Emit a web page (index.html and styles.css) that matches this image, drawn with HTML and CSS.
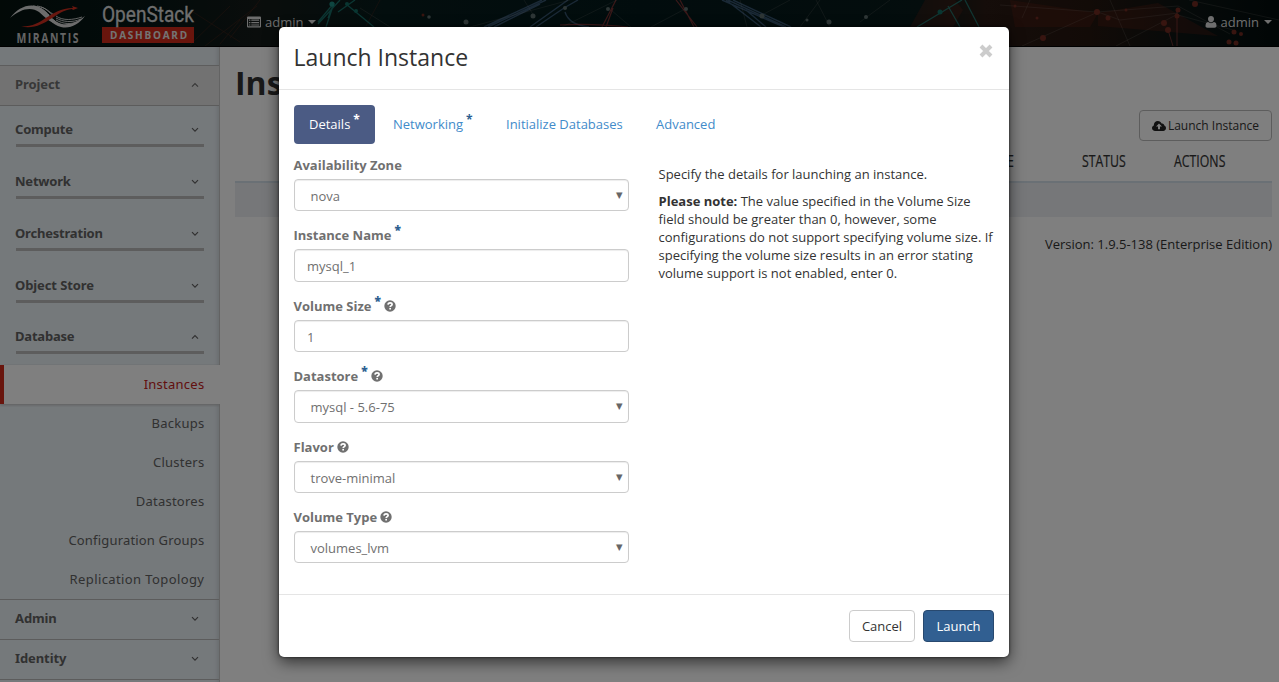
FILE: index.html
```html
<!DOCTYPE html>
<html lang="en">
<head>
<meta charset="utf-8">
<title>Instances - OpenStack Dashboard</title>
<link rel="stylesheet" href="styles.css">
</head>
<body>
<svg class="defs" width="0" height="0">
  <symbol id="help" viewBox="0 0 12 12"><circle cx="6" cy="6" r="5.7" fill="currentColor"/><path d="M4 4.6C4.1 3.4 5 2.8 6.1 2.8c1.2 0 2 .7 2 1.6 0 1.2-1.9 1.2-1.9 2.6" fill="none" stroke="#fff" stroke-width="1.7"/><rect x="5.3" y="7.9" width="1.700" height="1.600" fill="#fff"/></symbol>
  <symbol id="down" viewBox="0 0 8 6"><path d="M1 1.200 4 4.200 7 1.200" fill="none" stroke="currentColor" stroke-width="1.200"/></symbol>
  <symbol id="up" viewBox="0 0 8 6"><path d="M1 4.700 4 1.700 7 4.700" fill="none" stroke="currentColor" stroke-width="1.200"/></symbol>
</svg>

<header class="topbar">
  <svg class="topbar-art" viewBox="0 0 1279 46" preserveAspectRatio="none">
    <defs><linearGradient id="sky"><stop offset="0" stop-color="#04120f"/><stop offset=".12" stop-color="#061716"/><stop offset=".2" stop-color="#141a18"/><stop offset=".3" stop-color="#071c1c"/><stop offset=".5" stop-color="#03191b"/><stop offset=".72" stop-color="#081a1a"/><stop offset=".77" stop-color="#2a1a14"/><stop offset=".85" stop-color="#25160f"/><stop offset=".93" stop-color="#0b1413"/><stop offset="1" stop-color="#020c0c"/></linearGradient></defs>
    <rect width="1279" height="46" fill="url(#sky)"/>
    <path d="M910 27 925 0h30l8 10-10 17z M1010 0l5 27h75L1098 13zM1098 13l60-10 60 33-120-10z" fill="#6a2015" opacity=".3"/>
    <g fill="none" stroke="#5578a4" stroke-width="1.400" opacity=".6">
      <path d="M484 27 542 0M488 27 546 0M494 27 540 4M530 27l38-27M536 27l28-19 14-8M565 12q4 13 24 15M728 0l58 27M722 0l62 27M733 0l58 27M746 10l20 17M726 0l35 27"/>
    </g>
    <g fill="none" stroke="#c24040" stroke-width="1.200" opacity=".6"><path d="M616 0 602 27M613 8l-7 19M680 0l14 27M676 0l21 27M560 25q30-2 68 2"/></g>
    <g fill="none" stroke="#1fa298" stroke-width="1.300" opacity=".6"><path d="M318 22 334 3l-8 24M334 3l-6 15M318 24 340 0M346 4l28 23M355 0l-17 12M962 0l-45 27M948 6l12 21M965 0l14 27"/></g>
    <g fill="none" stroke="#a9a5a0" stroke-width=".6" opacity=".28"><path d="M390 27 360 8M470 27l100-27M534 16l-10-16M611 10l20 17M617 0l-55 27M685 9l-34 18M740 0l7 27M762 15 790 0M800 27l20-27M830 27l-14-27M890 0l-30 22M1000 5l97 7 81-6 52 28M1022 46l76-34 22 8 58-7M1178 15l55 15M1110 0l20 46M1030 0l-8 18M1176 15l-60 31M1279 20l-90-20"/></g>
    <path d="M1177 10v36M1168 30l5 16" stroke="#c24a4a" stroke-width=".8" opacity=".6"/>
    <g stroke="#b13d20" stroke-width=".6" opacity=".3"><path d="M190 45 230 6M205 46l52-40M220 44l20-24M190 10l50 32M260 0l-30 38M380 0l-14 26"/></g>
    <g fill="#702a20"><circle cx="1097" cy="12" r="3"/><circle cx="1108" cy="18" r="2.500"/><circle cx="1043" cy="38" r="3"/><circle cx="1178" cy="10" r="2.500"/><circle cx="1177" cy="16" r="2.500"/><circle cx="1164" cy="23" r="3"/><circle cx="1168" cy="30" r="3"/><circle cx="1195" cy="4" r="3"/><circle cx="1229" cy="42" r="2.500"/><circle cx="1236" cy="43" r="2.500"/><circle cx="1234" cy="32" r="2.500"/><circle cx="1241" cy="34" r="2"/><circle cx="1015" cy="6" r="1.500"/><circle cx="1037" cy="18" r="1.500"/><circle cx="1126" cy="10" r="1.500"/><circle cx="423" cy="15" r="1.500"/></g>
    <g fill="#5c6c6c"><circle cx="332" cy="4" r="2.600" fill="#1d8a80"/><circle cx="347" cy="4" r="2" fill="#126c62"/><circle cx="356" cy="11" r="2" fill="#126c62"/><circle cx="429" cy="17" r="1.800"/><circle cx="466" cy="22" r="2.500"/><circle cx="533" cy="16" r="2.500"/><circle cx="565" cy="8" r="2"/><circle cx="608" cy="9" r="2"/><circle cx="686" cy="9" r="2"/><circle cx="762" cy="16" r="2.500"/><circle cx="807" cy="20" r="1.500"/><circle cx="829" cy="22" r="2.500"/><circle cx="866" cy="17" r="2"/><circle cx="940" cy="12" r="2.500" fill="#126c62"/></g>
  </svg>
  <svg class="logo" viewBox="0 0 100 46">
    <g fill="#d8d8d8">
      <path d="M10 18C18 8 28 3 39 7c9 4 12 13 23 18-10 0-17-8-23-13C31 6 20 9 10 18z"/>
      <path d="M85 16C78 25 70 29 61 27c-9-2-13-10-20-16 8 5 13 11 21 13 9 1 15-2 23-8z"/>
    </g>
    <g fill="none" stroke="#d8d8d8" stroke-width=".9">
      <path d="M37 6c9 1 12 7 17 10M41 7c7 2 10 7 14 8M36 8c8 2 12 9 19 13M33 6c8 1 12 5 16 9M82 17c-9 3-19 4-26-1M81 19c-9 4-18 3-25-1M79 21c-8 4-16 3-23-1"/>
    </g>
    <path d="M21 26.500C44 27 48 9 73 8l-1-2 6 2-5 2-1-1C54 11 45 31 21 26.500z" fill="#d22f1f"/>
    <text class="mirantis" transform="translate(16.500 43) scale(.72 1)" textLength="86" lengthAdjust="spacing">MIRANTIS</text>
  </svg>
  <div class="brand">
    <svg class="wordmark" viewBox="0 0 96 27"><text x="0" y="22" textLength="92" lengthAdjust="spacingAndGlyphs">OpenStack</text></svg>
    <div class="ribbon">DASHBOARD</div>
  </div>
  <div class="context">
    <svg width="14" height="12" viewBox="0 0 14 12"><path fill="#ddd" fill-rule="evenodd" d="M1 0.500h12q1 0 1 1v9q0 1-1 1H1q-1 0-1-1v-9q0-1 1-1zM1.100 3v7.300h11.800V3z"/><path d="M2 4.200h1.400M4.300 4.200H12M2 6.600h1.400M4.300 6.600H12M2 9h1.400M4.300 9H12" stroke="#ddd" stroke-width="1.200"/></svg>
    <span>admin</span><i class="caret"></i>
  </div>
  <div class="user">
    <svg width="12" height="12" viewBox="0 0 12 12"><path fill="#ddd" d="M6 0c1.800 0 3 1.300 3 3.100S7.900 6.400 6 6.400 3 4.900 3 3.100 4.200 0 6 0zM3 6c2 1.500 4 1.500 6 0 2 .1 2.500 2.200 2.500 4 0 1.200-.8 1.700-2 1.700h-7C1.200 11.700.5 11.200.5 10 .5 8.200 1 6.100 3 6z"/></svg>
    <span>admin</span><i class="caret"></i>
  </div>
</header>

<div class="shell">
  <nav class="sidebar">
    <div class="dash dash-open"><span>Project</span><svg class="chev"><use href="#up"/></svg></div>
    <div class="panel first"><span>Compute</span><svg class="chev"><use href="#down"/></svg></div>
    <div class="panel"><span>Network</span><svg class="chev"><use href="#down"/></svg></div>
    <div class="panel"><span>Orchestration</span><svg class="chev"><use href="#down"/></svg></div>
    <div class="panel store"><span>Object Store</span><svg class="chev"><use href="#down"/></svg></div>
    <div class="panel last"><span>Database</span><svg class="chev"><use href="#up"/></svg></div>
    <a class="link active"><span>Instances</span></a>
    <a class="link"><span>Backups</span></a>
    <a class="link"><span>Clusters</span></a>
    <a class="link"><span>Datastores</span></a>
    <a class="link groups"><span>Configuration Groups</span></a>
    <a class="link topology"><span>Replication Topology</span></a>
    <div class="dash top"><span>Admin</span><svg class="chev"><use href="#down"/></svg></div>
    <div class="dash"><span>Identity</span><svg class="chev"><use href="#down"/></svg></div>
  </nav>
  <main class="content">
    <h1>Instances</h1>
    <div class="actions"><button class="launch-btn"><svg width="14" height="10" viewBox="0 0 14 10"><path fill="#222" d="M3.200 10C1.300 10 0 8.800 0 7.100c0-1.200.7-2.200 1.800-2.700C1.700 2 3.400 0 5.900 0c1.700 0 3.100 1 3.700 2.500 1.500-.4 2.700.7 2.600 2.100 1.100.3 1.800 1.300 1.800 2.500C14 8.800 12.800 10 11.200 10z"/><path fill="#fff" d="M7 2.400 10 5.600H8V8.200H6V5.600H4z"/></svg>Launch Instance</button></div>
    <div class="thead"><span class="th-e">E</span><span class="th-status">STATUS</span><span class="th-actions">ACTIONS</span></div>
    <div class="row"></div>
    <p class="version">Version: 1.9.5-138 (Enterprise Edition)</p>
  </main>
</div>

<div class="backdrop">
  <section class="modal">
    <div class="modal-head"><h2>Launch Instance</h2><svg class="close" width="14" height="14" viewBox="0 0 14 14"><path d="M2 2 12 12M12 2 2 12" stroke="#ccc" stroke-width="4"/></svg></div>
    <div class="modal-body">
      <div class="tabs">
        <a class="tab tab-on">Details<b class="req">*</b></a>
        <a class="tab tab-net">Networking<b class="req">*</b></a>
        <a class="tab tab-db">Initialize Databases</a>
        <a class="tab">Advanced</a>
      </div>
      <div class="cols">
        <form class="form">
          <div class="group"><label>Availability Zone</label><div class="field select">nova<i>▼</i></div></div>
          <div class="group"><label>Instance Name<b class="req">*</b></label><div class="field">mysql_1</div></div>
          <div class="group"><label>Volume Size<b class="req">*</b><svg class="help"><use href="#help"/></svg></label><div class="field">1</div></div>
          <div class="group"><label>Datastore<b class="req">*</b><svg class="help"><use href="#help"/></svg></label><div class="field select">mysql - 5.6-75<i>▼</i></div></div>
          <div class="group"><label>Flavor<svg class="help"><use href="#help"/></svg></label><div class="field select">trove-minimal<i>▼</i></div></div>
          <div class="group"><label>Volume Type<svg class="help"><use href="#help"/></svg></label><div class="field select">volumes_lvm<i>▼</i></div></div>
        </form>
        <div class="notes">
          <p>Specify the details for launching an instance.</p>
          <p><strong>Please note:</strong> The value specified in the Volume Size field should be greater than 0, however, some configurations do not support specifying volume size. If specifying the volume size results in an error stating volume support is not enabled, enter 0.</p>
        </div>
      </div>
    </div>
    <div class="modal-foot"><button class="btn">Cancel</button><button class="btn btn-primary">Launch</button></div>
  </section>
</div>
</body>
</html>
```
FILE: styles.css
```css
* { box-sizing: border-box; }
html, body { height: 100%; overflow: hidden; }
body { margin: 0; background: #fff; color: #333; font: 13px/18px "Open Sans", sans-serif; }
.defs { position: absolute; }
button { font: inherit; }

.topbar { position: relative; display: flex; height: 47px; background: #04100f; border-bottom: 1px solid #000; color: #ddd; }
.topbar-art { position: absolute; inset: 0; width: 100%; height: 46px; }
.logo { position: relative; width: 100px; height: 46px; overflow: visible; }
.mirantis { font: bold 14.500px "Open Sans", sans-serif; fill: #c8c8c8; }
.brand { position: relative; width: 96px; margin-left: 2px; }
.wordmark { display: block; width: 96px; height: 27px; overflow: visible; }
.wordmark text { font: 22px Roboto, sans-serif; fill: #ddd; stroke: #ddd; stroke-width: .3px; }
.ribbon { width: 92px; height: 16px; background: #d22b1a; color: #e8e8e8; font: bold 10px/16px "Open Sans", sans-serif; letter-spacing: 1.750px; padding-left: 8px; }
.context, .user { position: relative; display: flex; align-items: center; height: 44px; }
.context { margin-left: 49px; }
.context span { margin: 0 5px 0 4px; }
.user { margin-left: auto; margin-right: 7px; }
.user span { margin: 0 5px 0 4px; }
.caret { border: 4px solid transparent; border-top-color: #ddd; border-bottom: 0; }

.shell { display: flex; height: 635px; }
.sidebar { width: 220px; padding-top: 18px; background: #ebf2f7; border-right: 1px solid #c6c6c6; box-shadow: inset -6px 0 5px -5px #cbd2d6; font-family: "Noto Sans", sans-serif; color: #626262; }
.dash { display: flex; align-items: center; justify-content: space-between; height: 40px; padding: 0 20px 3px 15px; border-bottom: 1px solid #b9b9b9; font-weight: bold; letter-spacing: -.1px; }
.dash.top { height: 41px; border-top: 1px solid #b9b9b9; }
.dash-open { height: 41px; border-top: 1px solid #bbb; background: #e5e5e5; color: #707070; }
.chev { width: 8px; height: 6px; margin-top: 2px; }
.panel { display: flex; align-items: flex-end; justify-content: space-between; height: 52px; margin: 0 15px 0 16px; padding-bottom: 6px; border-bottom: 3px solid #bababa; font-weight: bold; letter-spacing: -.2px; }
.panel span { margin-left: -1px; }
.panel.store { letter-spacing: -.1px; }
.panel .chev { margin: 0 5px 5px 0; }
.panel.first { height: 41px; }
.panel.last { height: 51px; margin-bottom: 11px; }
.link { display: flex; align-items: center; justify-content: flex-end; height: 39px; padding: 0 14.600px 2px 0; letter-spacing: .25px; }
.groups { letter-spacing: .180px; }
.topology { letter-spacing: .4px; }
.link.active { margin-right: -1px; padding-right: 15.600px; border-left: 4px solid #d22b1a; background: #fff; color: #c42020; box-shadow: 0 1px 3px #bbb; clip-path: inset(-1px 0 -3px 0); }

.content { flex: 1; padding: 16px 7px 0 15px; }
h1 { margin: 0; font-size: 32px; line-height: 40px; color: #333; }
.actions { display: flex; justify-content: flex-end; padding-top: 7px; }
.launch-btn { display: flex; align-items: center; justify-content: center; gap: 2px; width: 133px; height: 31px; padding: 0; background: #fff; border: 1px solid #bbb; border-radius: 4px; color: #333; font-size: 12px; }
.thead { display: flex; justify-content: flex-end; height: 40px; font: 16px/40px "Open Sans", sans-serif; color: #333; -webkit-text-stroke: .2px #333; }
.thead span { transform: scaleX(.77); transform-origin: left; }
.th-e { width: 75px; }
.th-status { width: 92px; }
.th-actions { width: 98px; }
.row { height: 36px; background: #eceff2; border-top: 2px solid #d5e1ea; }
.version { margin: 18px 0 0; text-align: right; }

.backdrop { position: absolute; inset: 0; padding-top: 27px; background: rgba(0,0,0,.5); }
.modal { display: flex; flex-direction: column; width: 730px; height: 630px; margin: 0 auto 0 279px; background: #fff; border-radius: 5px; box-shadow: 0 5px 15px rgba(0,0,0,.6), 0 0 3px rgba(0,0,0,.7); }
.modal-head { display: flex; justify-content: space-between; height: 63px; padding: 14px 16px 0 14.500px; border-bottom: 1px solid #e5e5e5; }
h2 { margin: 0; font-size: 23px; font-weight: normal; line-height: 32px; }
.close { margin-top: 3px; }
.modal-body { flex: 1; padding: 15px 15px 0; }
.tabs { display: flex; gap: 3px; height: 39px; }
.tab { display: flex; align-items: center; padding: 0 15px 2px; border-radius: 4px; color: #428bca; }
.tab-on { width: 81px; background: #4b5b84; color: #fff; }
.tab-net { width: 110px; }
.tab-db { width: 147px; }
.req { color: #2d5f91; font-size: 12px; line-height: 12px; margin-left: 3px; align-self: flex-start; position: relative; top: -2px; }
.tab .req { top: 9px; }
.tab-on .req { color: #fff; }
.cols { display: flex; padding-top: 12.100px; }
.form { flex: none; width: 335px; }
.group { height: 70.400px; }
label { display: flex; align-items: center; height: 18px; margin: 0 0 5px -.5px; font-weight: bold; color: #707070; }
.help { width: 12px; height: 12px; margin-left: 3px; }
.field { height: 32.400px; padding: 1px 12px 0; border: 1px solid #ccc; border-radius: 4px; color: #707070; line-height: 31px; box-shadow: inset 0 1px 1px rgba(0,0,0,.075); }
.select { display: flex; justify-content: space-between; padding: 1px 5.500px 0 15.500px; }
.select i { font: normal 8.500px/28px "DejaVu Sans", sans-serif; color: #666; }
.notes { flex: none; width: 338px; margin-left: 29.500px; padding-top: 9px; }
.notes p { margin: 0 0 9px; }
.modal-foot { display: flex; justify-content: flex-end; gap: 8px; height: 63px; padding: 15px; border-top: 1px solid #e5e5e5; }
.btn { width: 66px; height: 32px; padding: 0; border: 1px solid #ccc; border-radius: 4px; background: #fff; color: #333; }
.btn-primary { width: 71px; background: #315f91; border-color: #28496f; color: #fff; }
```
